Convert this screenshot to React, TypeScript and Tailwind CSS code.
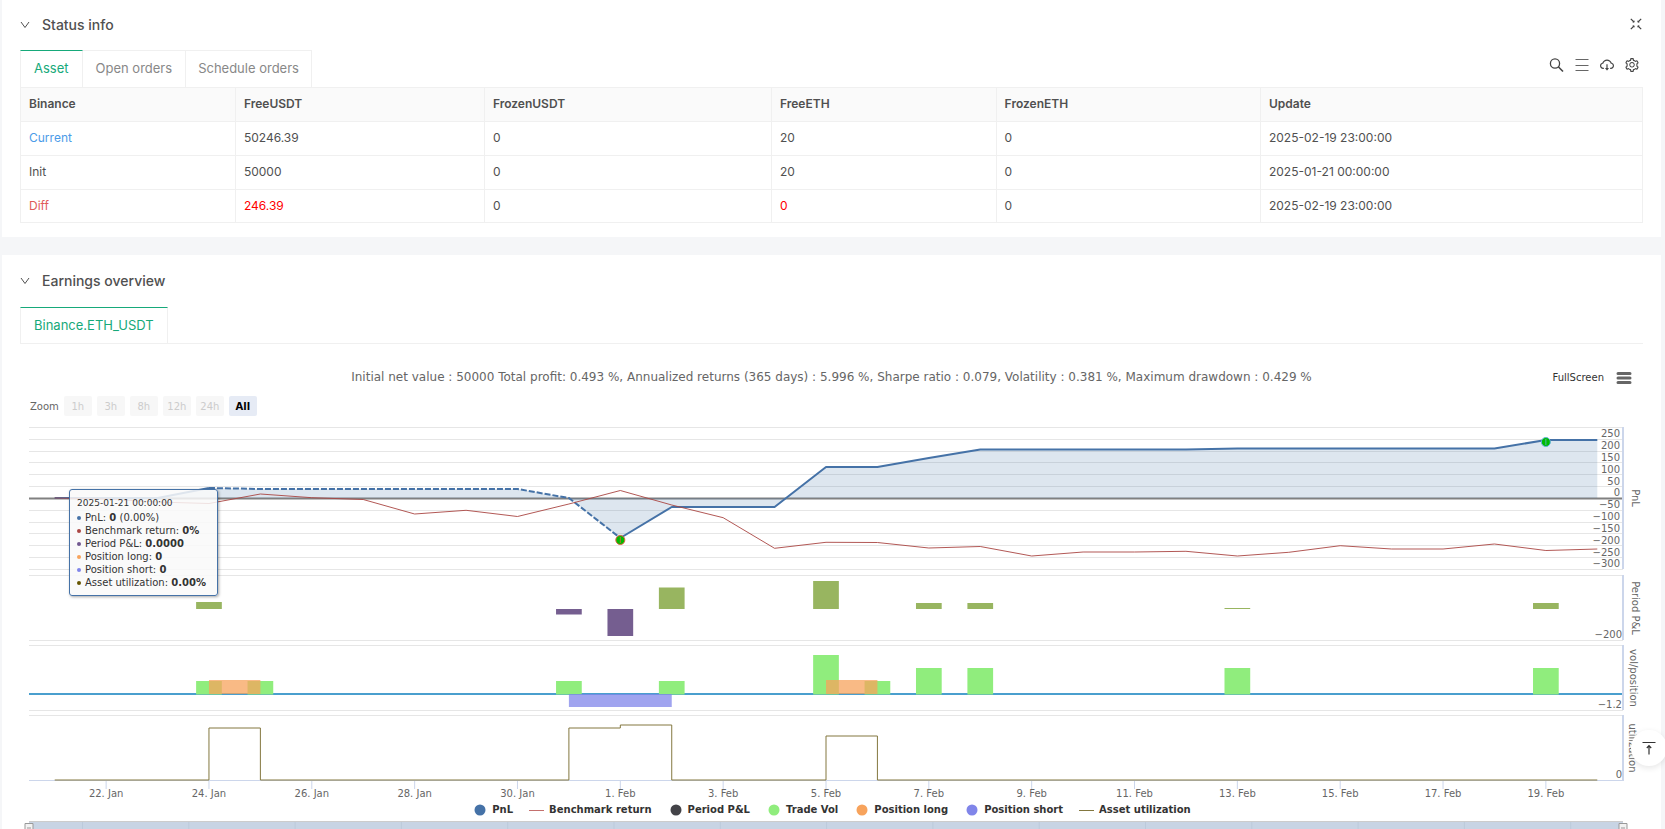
import { useLayoutEffect, useRef, useState } from "react";
import type { ReactNode } from "react";
import { AiOutlineCloudDownload, AiOutlineSetting } from "react-icons/ai";

const BALANCES = [
  { name: "Current", tone: "text-[#4c9be8]", usdt: "50246.39", eth: "20", delta: false, update: "2025-02-19 23:00:00" },
  { name: "Init", tone: "", usdt: "50000", eth: "20", delta: false, update: "2025-01-21 00:00:00" },
  { name: "Diff", tone: "text-[#e05a5a]", usdt: "246.39", eth: "0", delta: true, update: "2025-02-19 23:00:00" },
];
const COLUMNS = [
  { label: "Binance", width: "w-[13.25%]" },
  { label: "FreeUSDT", width: "w-[15.35%]" },
  { label: "FrozenUSDT", width: "w-[17.7%]" },
  { label: "FreeETH", width: "w-[13.85%]" },
  { label: "FrozenETH", width: "w-[16.3%]" },
  { label: "Update", width: "" },
];

const PNL = [
  498, 498, 498, 488, 489, 489, 489, 489, 489, 489, 498, 538, 507, 507, 507, 467, 467, 458, 449.5, 449.5, 449.5, 449.5,
  449.5, 448.5, 448.5, 448.5, 448.5, 448.5, 448.5, 440, 440,
];
const BENCHMARK = [
  498, 499, 502, 503.5, 494, 497.7, 499.5, 514, 510.3, 516.5, 504, 490.5, 505, 517.7, 548.3, 542.3, 542.5, 548, 546.5,
  556, 552, 552, 551.3, 556, 552.3, 545.7, 549, 549, 544, 550.5, 549,
];
const PERIOD: [number, number][] = [
  [3, 7], [10, -5.5], [11, -27], [12, 21.5], [15, 28], [17, 6], [18, 6], [23, 1], [29, 6],
];
const VOLUME: [number, number][] = [
  [3, 13], [4, 13], [10, 13], [12, 13], [15, 39], [16, 13], [17, 26], [18, 26], [23, 26], [29, 26],
];
const USAGE: [number, number][] = [
  [3, 728], [4, 780], [10, 728], [11, 725], [12, 780], [15, 736], [16, 780], [30, 780],
];
const DATES = [
  "22. Jan", "24. Jan", "26. Jan", "28. Jan", "30. Jan", "1. Feb", "3. Feb", "5. Feb", "7. Feb", "9. Feb", "11. Feb",
  "13. Feb", "15. Feb", "17. Feb", "19. Feb",
];
const LEVELS = ["", "250", "200", "150", "100", "50", "0", "−50", "−100", "−150", "−200", "−250", "−300"];
const TOP = 421;
const DAYS = 31;

function Charts() {
  const box = useRef<HTMLDivElement>(null);
  const [width, setWidth] = useState(1623);
  useLayoutEffect(() => {
    const node = box.current;
    if (!node) return;
    const measure = () => setWidth(node.clientWidth);
    measure();
    const observer = new ResizeObserver(measure);
    observer.observe(node);
    return () => observer.disconnect();
  }, []);

  const left = 9;
  const right = width - 20;
  const slot = (right - left) / DAYS;
  const x = (day: number) => left + slot * (day + 0.5);
  const line = (values: number[], from = 0) => values.map((v, i) => `${x(i + from)},${v}`).join(" ");
  const usagePath = USAGE.reduce((d, [day, y]) => `${d}H${x(day)}V${y}`, `M${x(0)} 780`);
  const grid = (y: number) => <line key={y} x1={left} x2={right} y1={y} y2={y} stroke="#e6e6e6" />;

  return (
    <div ref={box} className="w-full">
      <svg
        width={width}
        height={829 - TOP}
        viewBox={`0 ${TOP} ${width} ${829 - TOP}`}
        className="block overflow-visible font-['DejaVu_Sans',sans-serif] text-[10px]"
        fill="#666"
      >
        {LEVELS.map((_, i) => grid(427 + Math.round(i * 11.83) + 0.5))}
        {[575.5, 640.5, 645.5, 710.5, 715.5].map(grid)}
        <line x1={left} x2={right} y1="498.5" y2="498.5" stroke="#808080" strokeWidth="2" />
        <polygon points={`${x(0)},498 ${line(PNL)} ${x(30)},498`} fill="#4572a7" fillOpacity="0.18" />
        <polyline points={line(PNL.slice(0, 4))} fill="none" stroke="#4572a7" strokeWidth="2" />
        <polyline points={line(PNL.slice(3, 12), 3)} fill="none" stroke="#4572a7" strokeWidth="2" strokeDasharray="6 2" />
        <polyline points={line(PNL.slice(11), 11)} fill="none" stroke="#4572a7" strokeWidth="2" strokeLinejoin="round" />
        <polyline points={line(BENCHMARK)} fill="none" stroke="#aa4643" strokeOpacity="0.9" />
        {[
          { day: 11, y: 540, ring: "#e0603c" },
          { day: 29, y: 442, ring: "#5fb4d8" },
        ].map(({ day, y, ring }) => (
          <g key={day} stroke={ring}>
            <circle cx={x(day)} cy={y} r="4.5" fill="#0b0" />
            <path d={`M${x(day)} ${y + 3}v-6`} fill="none" strokeOpacity="0.8" />
          </g>
        ))}

        {PERIOD.map(([day, h]) => (
          <rect
            key={day}
            x={x(day) - slot / 4}
            y={h > 0 ? 609 - h : 609}
            width={slot / 2}
            height={Math.abs(h)}
            fill={h > 0 ? "#98b560" : "#755e90"}
          />
        ))}

        <line x1={left} x2={right} y1="694" y2="694" stroke="#4a9fce" strokeWidth="2" />
        {VOLUME.map(([day, h]) => (
          <rect key={day} x={x(day) - slot / 4} y={694 - h} width={slot / 2} height={h + 0.5} fill="#90ed7d" />
        ))}
        <rect x={x(3)} y="680" width={slot} height="14" fill="#f7a35c" fillOpacity="0.75" />
        <rect x={x(15)} y="680" width={slot} height="14" fill="#f7a35c" fillOpacity="0.75" />
        <rect x={x(10)} y="694" width={slot * 2} height="13" fill="#8085e9" fillOpacity="0.75" />

        <line x1={left} x2={right} y1="780.5" y2="780.5" stroke="#ccd6eb" />
        <path d={usagePath} fill="none" stroke="#83773f" />

        {[[427, 569], [575, 640], [645, 710], [715, 781]].map(([y1, y2]) => (
          <line key={y1} x1={right} x2={right} y1={y1} y2={y2} stroke="#ccd6eb" strokeWidth="2" />
        ))}
        {LEVELS.map((label, i) => (
          <text key={i} x={right - 3} y={425.500 + i * 11.83} textAnchor="end">
            {label}
          </text>
        ))}
        <text x={right - 1} y="638" textAnchor="end">−200</text>
        <text x={right - 1} y="708" textAnchor="end">−1.2</text>
        <text x={right - 1} y="778" textAnchor="end">0</text>
        {[
          { label: "PnL", y: 498, dx: 9 },
          { label: "Period P&L", y: 608, dx: 9 },
          { label: "vol/position", y: 678, dx: 7 },
          { label: "utilization", y: 748, dx: 6 },
        ].map(({ label, y, dx }) => (
          <text key={label} transform={`translate(${right + dx} ${y}) rotate(90)`} textAnchor="middle">
            {label}
          </text>
        ))}
        {DATES.map((label, i) => (
          <g key={label}>
            <line x1={x(i * 2 + 1)} x2={x(i * 2 + 1)} y1="781" y2="789" stroke="#ccd6eb" />
            <text x={x(i * 2 + 1)} y="797" textAnchor="middle">
              {label}
            </text>
          </g>
        ))}

        <rect x={left} y="821" width={right - left} height="8" fill="#c8d4e4" />
        <line x1={left} x2={right} y1="821.5" y2="821.5" stroke="#ccc" />
        {Array.from({ length: 15 }, (_, i) => (
          <line key={i} x1={left + 53.5 + i * 106.3} x2={left + 53.5 + i * 106.3} y1="822" y2="829" stroke="#bccadb" />
        ))}
        {[left, right].map((cx) => (
          <g key={cx} stroke="#999">
            <path d={`M${cx - 4} 829v-5.500h8v5.500`} fill="#f2f2f2" />
            <path d={`M${cx - 1} 827v2m2 -2v2`} />
          </g>
        ))}
      </svg>
    </div>
  );
}

function Tooltip() {
  const rows = [
    { color: "text-[#4572a7]", label: "PnL", value: "0", tail: " (0.00%)" },
    { color: "text-[#aa4643]", label: "Benchmark return", value: "0%", tail: "" },
    { color: "text-[#71588f]", label: "Period P&L", value: "0.0000", tail: "" },
    { color: "text-[#f7a35c]", label: "Position long", value: "0", tail: "" },
    { color: "text-[#8085e9]", label: "Position short", value: "0", tail: "" },
    { color: "text-[#665500]", label: "Asset utilization", value: "0.00%", tail: "" },
  ];
  return (
    <div className="absolute left-[49px] top-[68px] w-[149px] rounded-[3px] border border-[#4572a7] bg-[#f9f9f9]/85 px-[7px] pb-[6px] pt-[5px] text-[#333] shadow-[1px_1px_3px_rgba(0,0,0,0.35)]">
      <div className="whitespace-nowrap text-[9px] leading-4">2025-01-21 00:00:00</div>
      {rows.map((row) => (
        <div key={row.label} className="flex items-center gap-1 whitespace-nowrap text-[10px] leading-[13px]">
          <svg viewBox="0 0 4 4" className={`size-1 shrink-0 fill-current ${row.color}`}>
            <circle cx="2" cy="2" r="2" />
          </svg>
          <span>
            {row.label}: <b>{row.value}</b>
            {row.tail}
          </span>
        </div>
      ))}
    </div>
  );
}

function Legend() {
  const items = [
    { label: "PnL", color: "text-[#4572a7]", line: false },
    { label: "Benchmark return", color: "text-[#c4706e]", line: true },
    { label: "Period P&L", color: "text-[#434348]", line: false },
    { label: "Trade Vol", color: "text-[#90ed7d]", line: false },
    { label: "Position long", color: "text-[#f7a35c]", line: false },
    { label: "Position short", color: "text-[#8085e9]", line: false },
    { label: "Asset utilization", color: "text-[#83773f]", line: true },
  ];
  return (
    <ul className="absolute inset-x-0 bottom-[11px] flex justify-center gap-4 text-[10px] font-bold leading-4 text-[#333]">
      {items.map((item) => (
        <li key={item.label} className="flex items-center gap-1">
          <svg viewBox="0 0 16 12" className={`h-3 w-4 ${item.color}`}>
            {item.line ? <path d="M0 6.5h15" stroke="currentColor" /> : <circle cx="8" cy="6" r="5.5" fill="currentColor" />}
          </svg>
          {item.label}
        </li>
      ))}
    </ul>
  );
}

function Heading({ children }: { children: ReactNode }) {
  return (
    <h2 className="flex items-center gap-3 text-[14px] font-medium leading-6 text-[#505050]">
      <svg viewBox="0 0 10 8" className="h-2 w-[10px]" fill="none" stroke="#505050">
        <path d="M1 1l4 5.5L9 1" />
      </svg>
      {children}
    </h2>
  );
}

const iconButton = "text-[#444]";

export default function App() {
  return (
    <main className="flex flex-col gap-[18px] overflow-hidden bg-[#f5f6f8] pl-[2px] pr-1 font-['Inter',sans-serif]">
      <section className="bg-white px-[18px] pb-[14px] pt-[13px]">
        <header className="flex items-center justify-between">
          <Heading>Status info</Heading>
          <button aria-label="Exit full screen" className="mb-[3px] mr-px">
            <svg viewBox="0 0 12 12" className="size-3" fill="none" stroke="#444">
              <path d="M0.800 0.800L4 4M11.200 0.800L8 4M0.800 11.200L4 8M11.200 11.200L8 8" strokeWidth="1.200" />
              <path d="M2.600 4.200h1.600V2.600M9.400 4.200H7.800V2.600M2.600 7.800h1.600v1.600M9.400 7.800H7.800v1.600" strokeWidth="0.700" />
            </svg>
          </button>
        </header>
        <div className="mt-[13px] flex items-center justify-between">
          <nav className="flex h-[37px] text-[13px] text-[#888]">
            <button className="border-x border-t border-x-[#f0f0f0] border-t-[#16a97a] px-[13px] text-[#16a97a]">Asset</button>
            <button className="border-r border-t border-[#f0f0f0] px-[13px]">Open orders</button>
            <button className="border-r border-t border-[#f0f0f0] px-3">Schedule orders</button>
          </nav>
          <div className="mb-2 mr-[3px] flex items-center gap-[9px]">
            <button aria-label="Search" className={iconButton}>
              <svg viewBox="0 0 16 16" className="size-4" fill="none" stroke="currentColor" strokeWidth="1.3">
                <circle cx="6" cy="6.500" r="4.600" />
                <path d="M9.300 9.800L14 14.500" strokeWidth="1.600" />
              </svg>
            </button>
            <button aria-label="List" className={iconButton}>
              <svg viewBox="0 0 16 16" className="size-4" stroke="#666">
                <path d="M1.500 2.500h13M1.500 8.500h13M1.500 13.500h13" />
              </svg>
            </button>
            <button aria-label="Download" className={iconButton}><AiOutlineCloudDownload className="size-4" /></button>
            <button aria-label="Settings" className={iconButton}><AiOutlineSetting className="size-4" /></button>
          </div>
        </div>
        <table className="w-full table-fixed border-collapse text-left text-[12px] text-[#505050]">
          <thead>
            <tr className="h-[34px] bg-[#fafafa]">
              {COLUMNS.map((column) => (
                <th key={column.label} className={`border border-[#f0f0f0] px-2 pb-[2px] font-semibold ${column.width}`}>
                  {column.label}
                </th>
              ))}
            </tr>
          </thead>
          <tbody>
            {BALANCES.map((row) => (
              <tr key={row.name} className="h-[34px] last:h-[33px]">
                <td className={`border border-[#f0f0f0] px-2 pb-px ${row.tone}`}>{row.name}</td>
                <td className={`border border-[#f0f0f0] px-2 pb-px ${row.delta ? "text-[#f00]" : ""}`}>{row.usdt}</td>
                <td className="border border-[#f0f0f0] px-2 pb-px">0</td>
                <td className={`border border-[#f0f0f0] px-2 pb-px ${row.delta ? "text-[#f00]" : ""}`}>{row.eth}</td>
                <td className="border border-[#f0f0f0] px-2 pb-px">0</td>
                <td className="border border-[#f0f0f0] px-2 pb-px">{row.update}</td>
              </tr>
            ))}
          </tbody>
        </table>
      </section>

      <section className="bg-white px-[18px] pt-[14px]">
        <Heading>Earnings overview</Heading>
        <nav className="mt-[14px] flex h-[37px] border-b border-[#f0f0f0] text-[13px]">
          <button className="border-x border-t border-x-[#f0f0f0] border-t-[#16a97a] px-[13px] text-[#16a97a]">
            Binance.ETH_USDT
          </button>
        </nav>
        <div className="font-['DejaVu_Sans',sans-serif]">
          <div className="relative flex h-[49px] items-center justify-center pt-[17px]">
            <h3 className="text-[12px] leading-5 text-[#666]">
              Initial net value : 50000 Total profit: 0.493 %, Annualized returns (365 days) : 5.996 %, Sharpe ratio :
              0.079, Volatility : 0.381 %, Maximum drawdown : 0.429 %
            </h3>
            <div className="absolute right-[11px] top-[24px] flex items-center gap-3">
              <button className="text-[10px] leading-5 text-[#333]">FullScreen</button>
              <button aria-label="Chart menu">
                <svg viewBox="0 0 16 14" className="h-[14px] w-4" stroke="#666" strokeWidth="3" strokeLinecap="round">
                  <path d="M2 2.500h12M2 7h12M2 11.500h12" />
                </svg>
              </button>
            </div>
          </div>
          <div className="mb-[2px] flex h-[26px] items-center gap-[5px] pl-[10px] text-[10px] text-[#666]">
            <span>Zoom</span>
            {["1h", "3h", "8h", "12h", "24h"].map((range) => (
              <button key={range} disabled className="h-5 w-7 rounded-[2px] bg-[#f7f7f7] text-[#ccc]">
                {range}
              </button>
            ))}
            <button className="h-5 w-7 rounded-[2px] bg-[#e6ebf5] font-bold text-black">All</button>
          </div>
          <div className="relative">
            <Charts />
            <Legend />
            <Tooltip />
          </div>
        </div>
      </section>
      <button
        aria-label="Back to top"
        className="fixed bottom-[63px] right-[-2px] flex size-9 items-center justify-center rounded-full bg-white text-[#333] shadow-[0_2px_6px_rgba(0,0,0,0.1)]"
      >
        <svg viewBox="0 0 14 14" className="size-[14px]" fill="none" stroke="currentColor" strokeWidth="1.200">
          <path d="M0.500 1.500h13M7 13.500V5M4.800 7L7 4.600L9.200 7" />
        </svg>
      </button>
    </main>
  );
}
